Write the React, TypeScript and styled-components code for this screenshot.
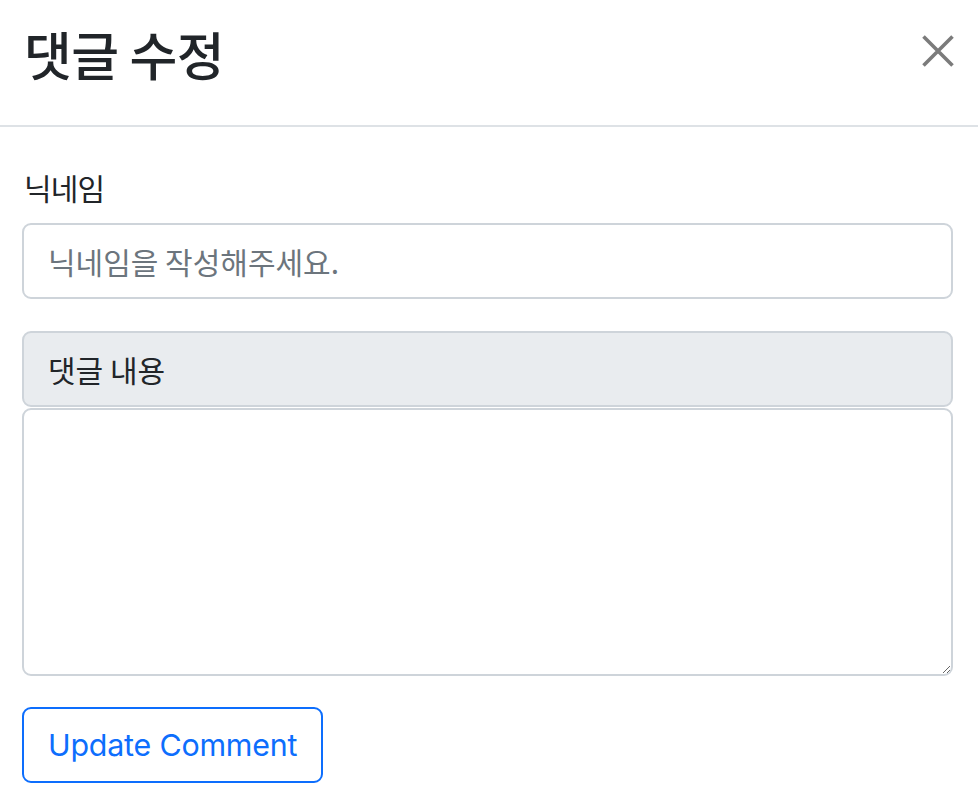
import React from "react";
import styled, { createGlobalStyle } from "styled-components";

const KO_FONT = `"Noto Sans CJK KR", "Noto Sans", sans-serif`;

const GlobalStyle = createGlobalStyle`
  html, body {
    margin: 0;
    padding: 0;
    background: #ffffff;
  }
  body {
    font-family: ${KO_FONT};
    color: #212529;
  }
  * {
    box-sizing: border-box;
  }
`;

const Modal = styled.div`
  width: 978px;
  min-height: 805px;
  background: #ffffff;
`;

const Header = styled.div`
  height: 127px;
  display: flex;
  align-items: flex-start;
  justify-content: space-between;
  padding: 21px 24px 0 24px;
  border-bottom: 2px solid #dee2e6;
`;

const Title = styled.h5`
  margin: 0;
  font-family: ${KO_FONT};
  font-size: 52px;
  font-weight: 500;
  letter-spacing: -0.6px;
  line-height: 66px;
  color: #212529;
`;

const CloseButton = styled.button`
  width: 32px;
  height: 32px;
  margin-top: 14px;
  padding: 0;
  border: 0;
  background: transparent;
  display: flex;
  align-items: center;
  justify-content: center;
  cursor: pointer;
`;

const Body = styled.div`
  display: flex;
  flex-direction: column;
  padding: 36px 25px 0 22px;
`;

const FieldLabel = styled.label`
  font-family: ${KO_FONT};
  font-size: 30px;
  letter-spacing: -0.8px;
  line-height: 48px;
  padding-left: 2px;
  margin-bottom: 12px;
  color: #212529;
`;

const TextInput = styled.input`
  width: 100%;
  height: 76px;
  padding: 0 24px;
  border: 2px solid #ced4da;
  border-radius: 9px;
  font-family: ${KO_FONT};
  font-size: 30px;
  letter-spacing: 0;
  color: #212529;
  outline: none;
  &::placeholder {
    color: #6c757d;
  }
`;

const InputGroup = styled.div`
  display: flex;
  flex-direction: column;
  gap: 1px;
  margin-top: 32px;
`;

const GroupLabel = styled.span`
  height: 76px;
  display: flex;
  align-items: center;
  padding: 0 24px;
  background: #e9ecef;
  border: 2px solid #ced4da;
  border-radius: 9px;
  font-family: ${KO_FONT};
  font-size: 30px;
  letter-spacing: 0;
  color: #212529;
`;

const TextArea = styled.textarea`
  width: 100%;
  height: 268px;
  padding: 12px 24px;
  border: 2px solid #ced4da;
  border-radius: 9px;
  font-family: ${KO_FONT};
  font-size: 30px;
  color: #212529;
  outline: none;
  resize: vertical;
`;

const OutlineButton = styled.button<{ color: string }>`
  align-self: flex-start;
  margin-top: 31px;
  height: 76px;
  padding: 0 24px;
  border: 2px solid ${(p) => p.color};
  border-radius: 9px;
  background: #ffffff;
  color: ${(p) => p.color};
  font-family: "Inter", "Liberation Sans", sans-serif;
  font-size: 30.4px;
  letter-spacing: -0.2px;
  cursor: pointer;
`;

const CloseIcon = () => (
  <svg width="32" height="32" viewBox="0 0 32 32">
    <path
      d="M1.5 1.5 L30.5 30.5 M30.5 1.5 L1.5 30.5"
      stroke="#7b7b7b"
      strokeWidth="3.6"
      fill="none"
    />
  </svg>
);

const App = () => {
  return (
    <>
      <GlobalStyle />
      <Modal>
        <Header>
          <Title>댓글 수정</Title>
          <CloseButton aria-label="Close">
            <CloseIcon />
          </CloseButton>
        </Header>
        <Body>
          <FieldLabel htmlFor="nickname">닉네임</FieldLabel>
          <TextInput id="nickname" placeholder="닉네임을 작성해주세요." />
          <InputGroup>
            <GroupLabel>댓글 내용</GroupLabel>
            <TextArea />
          </InputGroup>
          <OutlineButton color="#0d6efd">Update Comment</OutlineButton>
        </Body>
      </Modal>
    </>
  );
};

export default App;
